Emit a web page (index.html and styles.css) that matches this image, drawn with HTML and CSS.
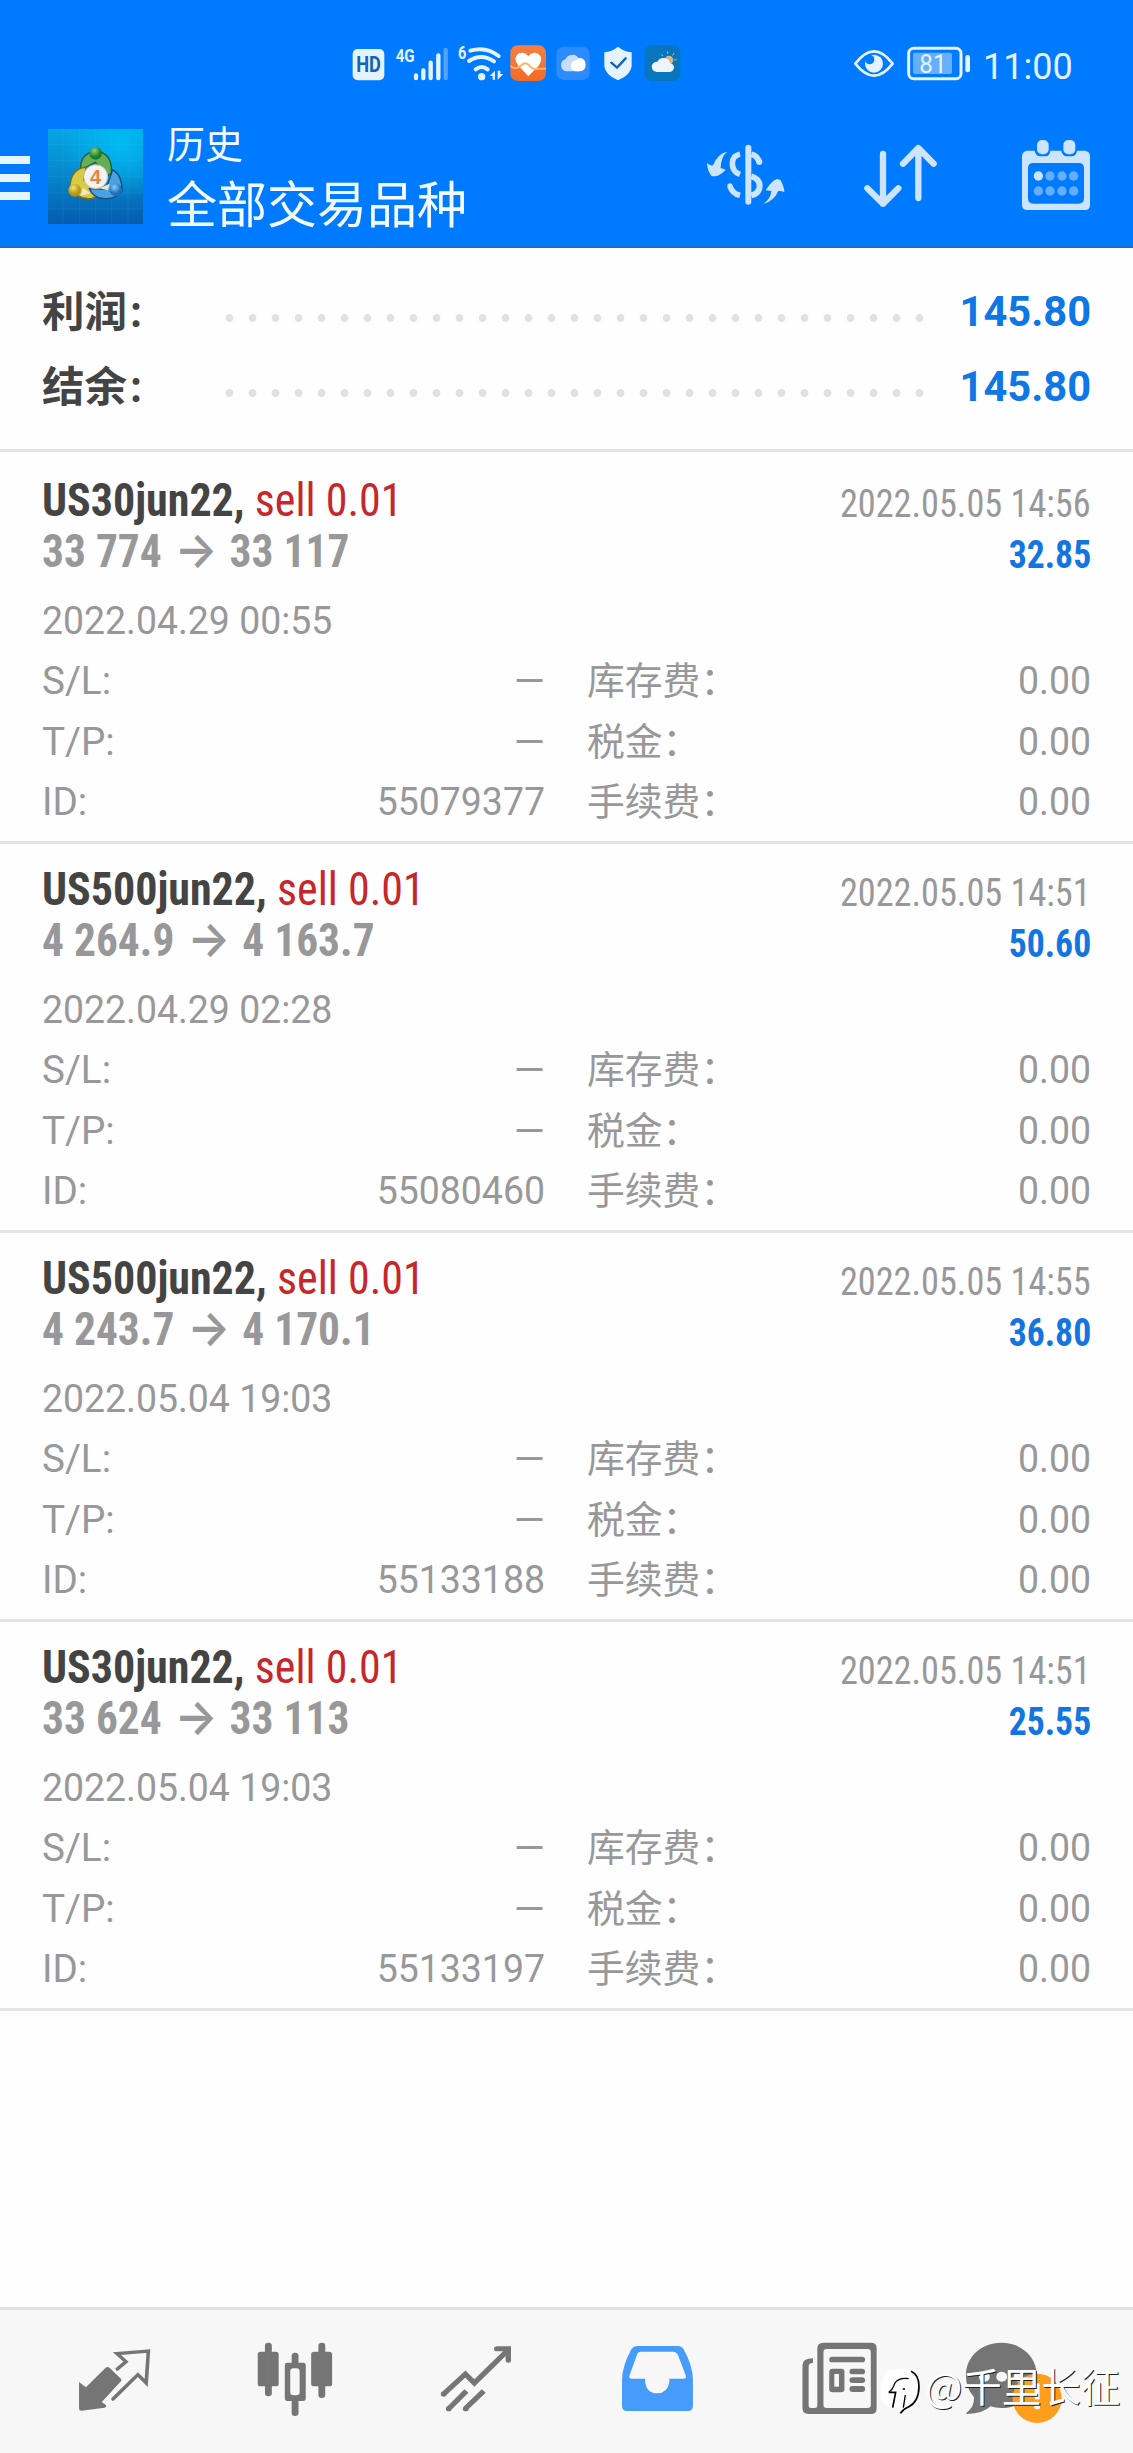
FILE: index.html
```html
<!DOCTYPE html>
<html lang="zh-CN">
<head>
<meta charset="utf-8">
<title>历史</title>
<link rel="stylesheet" href="styles.css">
</head>
<body>
<div class="screen">
  <header class="top">
    <div class="status">
      <div class="status-left">
        <svg width="50" height="70" viewBox="0 0 150 210"><rect x="38" y="57" width="95" height="94" rx="15" fill="#e4f3ff"/><text x="85.500" y="126" text-anchor="middle" textLength="74" lengthAdjust="spacingAndGlyphs" class="hd">HD</text></svg>
        <svg width="63.330" height="70" viewBox="150 0 190 210"><text x="167" y="96" textLength="57" lengthAdjust="spacingAndGlyphs" class="net">4G</text><g stroke="#e4f3ff" stroke-width="13" stroke-linecap="round"><path d="M228 136v8M250 121v23M272 98v46M295 76v68"/><path d="M317 60v84" opacity=".35"/></g></svg>
        <svg width="53.330" height="70" viewBox="340 0 160 210"><text x="355" y="88" textLength="25" lengthAdjust="spacingAndGlyphs" class="net">6</text><g fill="none" stroke="#e4f3ff" stroke-width="12" stroke-linecap="round"><path d="M392 62q47-14 85 16M388 93q37-25 75 1M408 118q18-14 36 0"/></g><circle cx="426" cy="140" r="11" fill="#e4f3ff"/><path d="M450 138l16-16v27h-7v-11zM474 122v27l17-17h-9v-10z" fill="#e4f3ff"/></svg>
        <svg width="46.670" height="70" viewBox="500 0 140 210"><defs><linearGradient id="o" x2="0" y2="1"><stop stop-color="#f78041"/><stop offset="1" stop-color="#f26a28"/></linearGradient></defs><rect x="510" y="46" width="107" height="107" rx="22" fill="url(#o)"/><path d="M564 139l-31-33q-17-25 3-36 17-7 28 9 12-16 29-8 18 11 2 36z" fill="#fff"/><path d="M511 108q13 12 26 2l13-9q8-4 14 3l8 8q10 8 20 4l25 0" fill="none" stroke="#f8b56b" stroke-width="6"/></svg>
        <svg width="40" height="70" viewBox="640 0 120 210"><rect x="650" y="50" width="100" height="100" rx="22" fill="#2e8bff"/><path d="M680 124a19 19 0 0 1-2-37q6-13 19-12 12-3 21 12 20 0 20 19 0 17-16 18z" fill="#c6ddfd"/><path d="M708 124q-16-3-15-18 3-14 17-15 5-8 14-7 14 4 13 19-1 20-18 21z" fill="#fff"/></svg>
        <svg width="46.670" height="70" viewBox="760 0 140 210"><path d="M835 50q18 15 41 17v42q-3 27-41 42-38-15-41-42V67q22-2 41-17z" fill="#e4f3ff"/><path d="M815 98l17 15 26-28" fill="none" stroke="#1463b8" stroke-width="7" stroke-linecap="round" stroke-linejoin="round"/></svg>
        <svg width="60" height="70" viewBox="900 0 180 210"><rect x="914" y="46" width="107" height="107" rx="22" fill="#0875bd"/><circle cx="987" cy="90" r="13" fill="#d9b48b"/><path d="M969 78l-6-5M984 72l-2-8M998 76l4-7M1003 90l7-1" stroke="#d9b48b" stroke-width="3"/><path d="M950 126q-15-2-15-17 2-14 17-14 6-12 20-11 16 2 18 15 13 4 12 15-3 12-15 12z" fill="#eef4fc"/></svg>
      </div>
      <div class="status-right">
        <svg width="60" height="70" viewBox="0 0 180 210"><path d="M46 101q56-74 112 0-56 72-112 0z" fill="none" stroke="#e4f3ff" stroke-width="8" stroke-linejoin="round"/><circle cx="102" cy="101" r="27" fill="#e4f3ff"/><circle cx="89" cy="89" r="14" fill="#007aff"/></svg>
        <svg width="80" height="70" viewBox="180 0 240 210"><rect x="206" y="55" width="157" height="91" rx="15" fill="none" stroke="#e4f3ff" stroke-width="9"/><rect x="219" y="68" width="117" height="64" rx="5" fill="#66afff"/><text x="279" y="130" text-anchor="middle" textLength="82" lengthAdjust="spacingAndGlyphs" class="batt">81</text><rect x="376" y="75" width="14" height="52" rx="6" fill="#e4f3ff"/></svg>
        <span class="clock">11:00</span>
      </div>
    </div>
    <div class="bar">
      <div class="burger"><i></i><i></i><i></i></div>
      <svg class="logo" viewBox="144 56 285 285">
        <defs><linearGradient id="bg" x2="0" y2="1"><stop stop-color="#04a8e6"/><stop offset=".5" stop-color="#0785cb"/><stop offset="1" stop-color="#045cae"/></linearGradient>
        <radialGradient id="glow" cx=".75" cy=".15" r=".6"><stop stop-color="#00baf2"/><stop offset="1" stop-color="#00baf2" stop-opacity="0"/></radialGradient>
        <radialGradient id="gr" cx=".4" cy=".3"><stop stop-color="#8fd27b"/><stop offset="1" stop-color="#187f2a"/></radialGradient>
        <radialGradient id="ye" cx=".4" cy=".3"><stop stop-color="#f3e36c"/><stop offset="1" stop-color="#b69412"/></radialGradient>
        <radialGradient id="bl" cx=".4" cy=".3"><stop stop-color="#8bcdf8"/><stop offset="1" stop-color="#1c70bd"/></radialGradient></defs>
        <path d="M144 56h285v285H144z" fill="url(#bg)"/><path d="M144 56h285v285H144z" fill="url(#glow)"/>
        <path d="M189 56v285M238 56v285M286 56v285M335 56v285M384 56v285M144 102h285M144 151h285M144 199h285M144 248h285M144 296h285" stroke="#58c4ee" stroke-opacity=".18" stroke-width="2"/>
        <path d="M242 180q-4-51 46-58 50 6 46 66l-14 10-34-42z" fill="#66ae55" stroke="#215f39" stroke-width="4"/>
        <path d="M258 170q-45 5-48 58 20 40 62 37 18-2 21-17l-42-40z" fill="#d9ca45" stroke="#706f29" stroke-width="4"/>
        <path d="M338 178q30 18 28 66-18 23-52 21-35-2-46-30l50 2z" fill="#4ba2e0" stroke="#174f83" stroke-width="4"/>
        <path d="M249 232l-8 25 30-8zM329 220l-5 20-26-6z" fill="#eee8ca"/>
        <circle cx="287" cy="129" r="19" fill="url(#gr)"/><circle cx="224" cy="240" r="19" fill="url(#ye)"/><circle cx="347" cy="238" r="19" fill="url(#bl)"/>
        <circle cx="287" cy="199" r="36" fill="#f3f3f1" stroke="#bcbcb4" stroke-width="3"/><text x="287" y="221" text-anchor="middle" class="four">4</text>
      </svg>
      <div class="titles"><div class="t1">历史</div><div class="t2">全部交易品种</div></div>
      <div class="actions">
        <svg width="151" height="150" viewBox="0 0 453 450"><g fill="#cce4fc"><path d="M142 125q-19 14-20 49l15 5q-16 18-32 20h-10q-13-16-14-40 9 9 18 7 13-35 43-41zM250 282q22-16 24-39l-17-2q16-26 32-33 8-2 13 3 11 22 11 35-10-4-18-3-14 31-45 39z"/></g><g fill="none" stroke="#cce4fc"><path d="M205 113v162" stroke-width="18" stroke-linecap="round"/><path d="M180 133q-23 4-23 28t23 32M180 256q-23-5-30-27" stroke-width="17"/><path d="M214 133q17 3 24 23M214 199q25 7 25 29t-25 28" stroke-width="18"/></g><circle cx="150" cy="228" r="8" fill="#cce4fc"/><circle cx="238" cy="156" r="9" fill="#cce4fc"/></svg>
        <svg width="151" height="150" viewBox="453 0 453 450"><g fill="none" stroke="#cce4fc" stroke-width="19" stroke-linecap="round" stroke-linejoin="round"><path d="M609 132v149M562 235l47 46 46-46M715 264V115M669 161l46-47 46 47"/></g></svg>
        <svg width="151" height="150" viewBox="906 0 453 450"><path fill-rule="evenodd" d="M1042 122h22q3 16 16 17h17q12-1 14-17h33q3 16 16 17h15q14-1 16-17h24q15 3 15 16v147q0 15-15 15h-173q-16 0-16-15V138q1-14 16-16zM1060 159q-16 0-16 16v90q0 16 16 16h136q16 0 16-16v-90q0-16-16-16z" fill="#cce4fc"/><rect x="1071" y="90" width="35" height="43" rx="15" fill="#cce4fc"/><rect x="1150" y="90" width="36" height="43" rx="15" fill="#cce4fc"/><circle cx="1075" cy="198" r="14" fill="#cce4fc"/><g fill="#66aefc"><circle cx="1110" cy="198" r="14"/><circle cx="1146" cy="198" r="14"/><circle cx="1181" cy="198" r="14"/><circle cx="1075" cy="243" r="14"/><circle cx="1110" cy="243" r="14"/><circle cx="1146" cy="243" r="14"/><circle cx="1181" cy="243" r="14"/></g></svg>
      </div>
    </div>
  </header>

  <section class="summary">
    <div class="sum"><span class="sl">利润<i>：</i></span><span class="dots"></span><span class="sv">145.80</span></div>
    <div class="sum"><span class="sl">结余<i>：</i></span><span class="dots"></span><span class="sv">145.80</span></div>
  </section>

  <main class="deals">
    <article class="deal">
      <div class="row head"><span class="sym"><b>US30jun22,</b> <em>sell 0.01</em></span><span class="when">2022.05.05 14:56</span></div>
      <div class="row price"><span class="px">33 774 <i class="arr">→</i> 33 117</span><span class="pl">32.85</span></div>
      <div class="opened"><span>2022.04.29 00:55</span></div>
      <div class="grid"><span>S/L:</span><span class="dash">–</span><span class="cn">库存费：</span><span>0.00</span><span>T/P:</span><span class="dash">–</span><span class="cn">税金：</span><span>0.00</span><span>ID:</span><span>55079377</span><span class="cn">手续费：</span><span>0.00</span></div>
    </article>
    <article class="deal">
      <div class="row head"><span class="sym"><b>US500jun22,</b> <em>sell 0.01</em></span><span class="when">2022.05.05 14:51</span></div>
      <div class="row price"><span class="px">4 264.9 <i class="arr">→</i> 4 163.7</span><span class="pl">50.60</span></div>
      <div class="opened"><span>2022.04.29 02:28</span></div>
      <div class="grid"><span>S/L:</span><span class="dash">–</span><span class="cn">库存费：</span><span>0.00</span><span>T/P:</span><span class="dash">–</span><span class="cn">税金：</span><span>0.00</span><span>ID:</span><span>55080460</span><span class="cn">手续费：</span><span>0.00</span></div>
    </article>
    <article class="deal">
      <div class="row head"><span class="sym"><b>US500jun22,</b> <em>sell 0.01</em></span><span class="when">2022.05.05 14:55</span></div>
      <div class="row price"><span class="px">4 243.7 <i class="arr">→</i> 4 170.1</span><span class="pl">36.80</span></div>
      <div class="opened"><span>2022.05.04 19:03</span></div>
      <div class="grid"><span>S/L:</span><span class="dash">–</span><span class="cn">库存费：</span><span>0.00</span><span>T/P:</span><span class="dash">–</span><span class="cn">税金：</span><span>0.00</span><span>ID:</span><span>55133188</span><span class="cn">手续费：</span><span>0.00</span></div>
    </article>
    <article class="deal">
      <div class="row head"><span class="sym"><b>US30jun22,</b> <em>sell 0.01</em></span><span class="when">2022.05.05 14:51</span></div>
      <div class="row price"><span class="px">33 624 <i class="arr">→</i> 33 113</span><span class="pl">25.55</span></div>
      <div class="opened"><span>2022.05.04 19:03</span></div>
      <div class="grid"><span>S/L:</span><span class="dash">–</span><span class="cn">库存费：</span><span>0.00</span><span>T/P:</span><span class="dash">–</span><span class="cn">税金：</span><span>0.00</span><span>ID:</span><span>55133197</span><span class="cn">手续费：</span><span>0.00</span></div>
    </article>
  </main>

  <nav class="tabs">
    <svg viewBox="66.500 60 501.400 429" preserveAspectRatio="none"><path d="M219 276l19 16 54-58q6-6 12 0l31 32q3 4 0 8l-53 62 12 10q2 5-4 7l-64 9q-7 0-7-6z" fill="#757575"/><g fill="none" stroke="#757575" stroke-width="10" stroke-linecap="round"><path d="M325 237l24-22-25-24 87-8-6 96-23-25-69 73"/></g></svg>
    <svg viewBox="567.900 60 501.400 429" preserveAspectRatio="none"><g fill="#757575"><rect x="714" y="185" width="58" height="104" rx="8"/><rect x="734" y="158" width="19" height="161" rx="9"/><rect x="862" y="185" width="58" height="104" rx="8"/><rect x="882" y="158" width="19" height="166" rx="9"/><rect x="808" y="188" width="19" height="190" rx="9"/><rect x="789" y="218" width="58" height="115" rx="7"/></g><rect x="804" y="235" width="26" height="81" rx="9" fill="#f7f7f7"/></svg>
    <svg viewBox="1069.200 60 501.400 429" preserveAspectRatio="none"><g fill="none" stroke="#757575" stroke-width="15"><path d="M1229 312l60-60 25 27 94-100" stroke-linejoin="miter"/><path d="M1376 176h32v35" stroke-linecap="round"/><path d="M1292 303l-48 52M1340 303l-50 52"/></g><g fill="#757575"><circle cx="1229" cy="312" r="8"/><circle cx="1243" cy="356" r="8"/><circle cx="1290" cy="356" r="8"/></g></svg>
    <svg viewBox="2.800 60 500.600 429" preserveAspectRatio="none"><path fill-rule="evenodd" d="M197 168h112q12 0 17 11 25 49 25 90v80q0 14-14 14H169q-14 0-14-14v-80q0-39 26-92 6-9 16-9zM207 185q-7 0-10 7l-22 67q-1 7 7 7h37v10q4 34 33 34t34-34v-10h38q9 0 8-7l-22-63q-4-11-14-11z" fill="#459cfb"/></svg>
    <svg viewBox="503.300 60 500.600 429" preserveAspectRatio="none"><path fill-rule="evenodd" d="M683 205v14q-12-1-12 11v117q0 7 7 7h10q7 0 7-7V176q0-18 17-18h131q16 0 16 16v182q0 16-16 16H671q-17 0-17-17V226q0-21 29-21zM721 177q-9 0-9 9v160q0 8 9 8h113q9 0 9-8V186q0-9-9-9z" fill="#757575"/><g fill="#757575"><rect x="728" y="200" width="99" height="17" rx="8"/><rect x="728" y="236" width="42" height="71" rx="9"/><rect x="784" y="236" width="43" height="17" rx="8"/><rect x="784" y="262" width="43" height="17" rx="8"/><rect x="784" y="288" width="43" height="18" rx="8"/></g><path d="M742 252h13v38h-13z" fill="#f7f7f7"/></svg>
    <svg viewBox="1003.900 60 500.600 429" preserveAspectRatio="none"><path d="M1204 158c56 0 98 43 98 98s-42 98-98 98q-17 0-30-5-20 22-65 23-6 0 4-9 17-16 15-42-22-25-22-65c0-55 42-98 98-98z" fill="#757575"/><circle cx="1157" cy="260" r="15" fill="#f7f7f7"/><circle cx="1205" cy="260" r="15" fill="#f7f7f7"/><circle cx="1253" cy="260" r="15" fill="#f7f7f7"/><ellipse cx="1303" cy="325" rx="68" ry="74" fill="#ff9d1c"/><path d="M1303 280v48" stroke="#fff" stroke-width="13"/><circle cx="1303" cy="350" r="8" fill="#fff"/></svg>
    <div class="mark">
      <svg width="44" height="54" viewBox="57 113 132 162"><path d="M88 122q50-8 78 4 12 20 11 56-4 36-37 48l-20 14-4-8q-45 4-52-26-4-76 24-88z" fill="#fff"/><g fill="none" stroke="#000"><path d="M153 126q24 10 24 46-1 46-32 61-12 4-24 19" stroke-width="5"/><path d="M86 189h21l-9 46" stroke-width="5"/><path d="M87 188q12-8 17-26 12-18 42-14M136 197l-6 38M128 179h7" stroke-width="4"/></g></svg>
      <span>@千里长征</span>
    </div>
  </nav>
</div>
</body>
</html>
```
FILE: styles.css
```css
* { box-sizing: border-box; }
body { margin: 0; font-family: Roboto, "Noto Sans CJK SC", sans-serif; background: #fff; }
.screen { width: 1133px; height: 2453px; display: flex; flex-direction: column; background: #fefefe; overflow: hidden; }
svg { display: block; flex: none; }
i, em { font-style: normal; }

.top { height: 248px; flex: none; background: #007aff; border-bottom: 2px solid #1c6ad2; }
.status { height: 110px; padding: 30px 0 0 340px; display: flex; }
.status-left { display: flex; width: 500px; }
.status-right { display: flex; }
.hd { font: 700 64px "Roboto"; fill: #1463b8; }
.net { font: 700 56px "Roboto"; fill: #e4f3ff; }
.batt { font: 400 75px "Roboto"; fill: #e4f3ff; }
.four { font: 700 60px "Liberation Sans"; fill: #e8833a; }
.clock { font-size: 36px; line-height: 70px; color: #e4f3ff; margin-left: 3px; padding-top: 2px; }

.bar { display: flex; height: 136px; }
.burger { width: 30px; padding-top: 46px; display: flex; flex-direction: column; gap: 10px; }
.burger i { height: 8px; background: #e6f6ff; }
.logo { width: 95px; height: 95px; margin: 19px 24px 0 18px; }
.titles { width: 513px; color: #f2fcff; font-family: "Noto Sans CJK SC", sans-serif; }
.t1 { font-size: 38px; line-height: 50px; margin-top: 7px; }
.t2 { font-size: 50px; line-height: 70px; margin-top: -1px; }
.actions { display: flex; }

.summary { height: 204px; flex: none; padding: 26px 42px 0; border-bottom: 3px solid #e4e4e4; }
.sum { display: flex; align-items: center; height: 75px; }
.sl { width: 176px; font: 700 42.500px/69px "Noto Sans CJK SC", sans-serif; color: #444; white-space: nowrap; padding-bottom: 3px; }
.sl i { font-size: 36px; }
.dots { width: 714px; height: 8px; margin: 12px auto 0 0; background: radial-gradient(circle, #e1e1e1 3.600px, transparent 4.200px) 0 0 / 23px 8px; }
.sv { font-weight: 700; font-size: 41.600px; color: #0f76e6; }

.deals { padding-top: 3px; flex: 1; }
.deal { height: 389px; border-bottom: 3px solid #e4e4e4; padding: 19px 42px 0; color: #98989a; }
.row { display: flex; justify-content: space-between; height: 51px; line-height: 51px; white-space: nowrap; }
.sym, .px { font-size: 47px; transform: scaleX(.936); transform-origin: left; font-stretch: 75%; }
.sym b { color: #444; }
.sym em { color: #c6272b; }
.px { font-weight: 700; line-height: 48px; transform: scaleX(.924); }
.arr { font-family: Inter, sans-serif; font-weight: 600; font-size: 49px; line-height: 1; padding: 0 2px 0 3px; }
.when, .pl { font-size: 39px; font-stretch: 75%; transform: scaleX(.93); transform-origin: right; padding-top: 5px; }
.pl { font-weight: 700; color: #1275e0; transform: scaleX(.915); }
.opened { font-size: 39px; line-height: 60px; margin-top: 15px; height: 60px; transform: scaleX(.959); transform-origin: left; }
.grid { display: grid; grid-template-columns: 200px 303px 245px 301px; grid-auto-rows: 60.500px; line-height: 60.500px; font-size: 39px; }
.grid > span { transform: scaleX(.99); transform-origin: left; }
.grid > span:nth-child(2n) { text-align: right; transform: scaleX(.96); transform-origin: right; }
.grid > .dash:nth-child(2n) { transform: translateX(2px) scaleX(1.350); }
.grid > .cn { padding-left: 42px; white-space: nowrap; font-family: "Noto Sans CJK SC", sans-serif; font-size: 37.800px; margin-top: -3px; transform: none; }

.tabs { height: 146px; flex: none; background: #f7f7f7; border-top: 3px solid #e2e2e2; padding: 0 24px; display: flex; position: relative; }
.tabs > svg { width: 181px; height: 143px; }
.mark { position: absolute; left: 879px; top: 48px; display: flex; align-items: center; color: #fff; font: 400 39.500px/54px "Noto Sans CJK SC", sans-serif; text-shadow: 1px 1px 0 #222; white-space: nowrap; }
.mark svg { position: relative; top: 9px; }
.mark span { margin-left: 2px; }
```
